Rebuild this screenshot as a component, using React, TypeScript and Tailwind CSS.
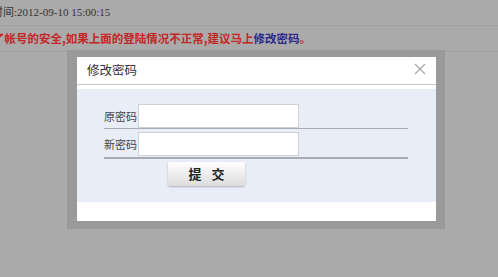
import React from 'react';

const cjk = '"Noto Sans CJK SC", "Liberation Sans", sans-serif';

const Row = ({ label, last }: { label: string; last?: boolean }) => (
  <div
    className={
      'flex items-center w-[304px] ' +
      (last ? 'border-b-2 border-[#a9abb3] pt-[3px] pb-[1px]' : 'border-b border-[#a9abb3]')
    }
  >
    <span className="w-[34px] text-[11px] text-[#444]">{label}</span>
    <input
      type="password"
      className="w-[161px] h-[24px] bg-white border border-[#cfd0d4] outline-none"
    />
  </div>
);

const App = () => {
  return (
    <div
      className="relative w-[498px] h-[277px] bg-[#aaaaaa] overflow-hidden"
      style={{ fontFamily: cjk }}
    >
      <div className="h-[26px] border-b border-[#a0a0a0] flex items-center">
        <span
          className="-ml-[8px] text-[11px] text-[#333] pb-[1px]"
          style={{ fontFamily: '"Liberation Serif", "Noto Sans CJK SC", serif' }}
        >
          时间:2012-09-10 15:00:15
        </span>
      </div>
      <div className="h-[26px] border-b border-[#a0a0a0] flex items-center">
        <span className="-ml-[7px] text-[11.5px] font-bold text-[#c42626]">
          了帐号的安全,如果上面的登陆情况不正常,建议马上
          <span className="text-[#2b2b8c]">修改密码</span>。
        </span>
      </div>

      <div className="absolute left-[67px] top-[50px] bg-[#9a9a9a] pl-[10px] pr-[9px] pt-[7px] pb-[8px]">
        <div className="w-[359px] h-[164px] bg-white flex flex-col">
          <div className="h-[28px] border-b border-[#c8c8c0] flex items-center justify-between pl-[10px] pr-[10px]">
            <span className="text-[12.5px] text-[#333]">修改密码</span>
            <svg width="12" height="12" viewBox="0 0 12 12" className="mt-[-4px]">
              <path d="M1 1L11 11M11 1L1 11" stroke="#a8a8a8" strokeWidth="1.3" />
            </svg>
          </div>
          <div className="mt-[4px] h-[113px] bg-[#e9edf8] pl-[27px] pt-[15px] flex flex-col">
            <Row label="原密码" />
            <Row label="新密码" last />
            <button className="mt-[3px] ml-[64px] w-[77px] h-[24px] rounded-[2px] bg-gradient-to-b from-white to-[#dcdcdc] shadow-[0_1px_2px_rgba(0,0,0,0.25)] text-[13px] font-bold text-[#222] tracking-[10px] pl-[10px]">
              提交
            </button>
          </div>
        </div>
      </div>
    </div>
  );
};

export default App;
